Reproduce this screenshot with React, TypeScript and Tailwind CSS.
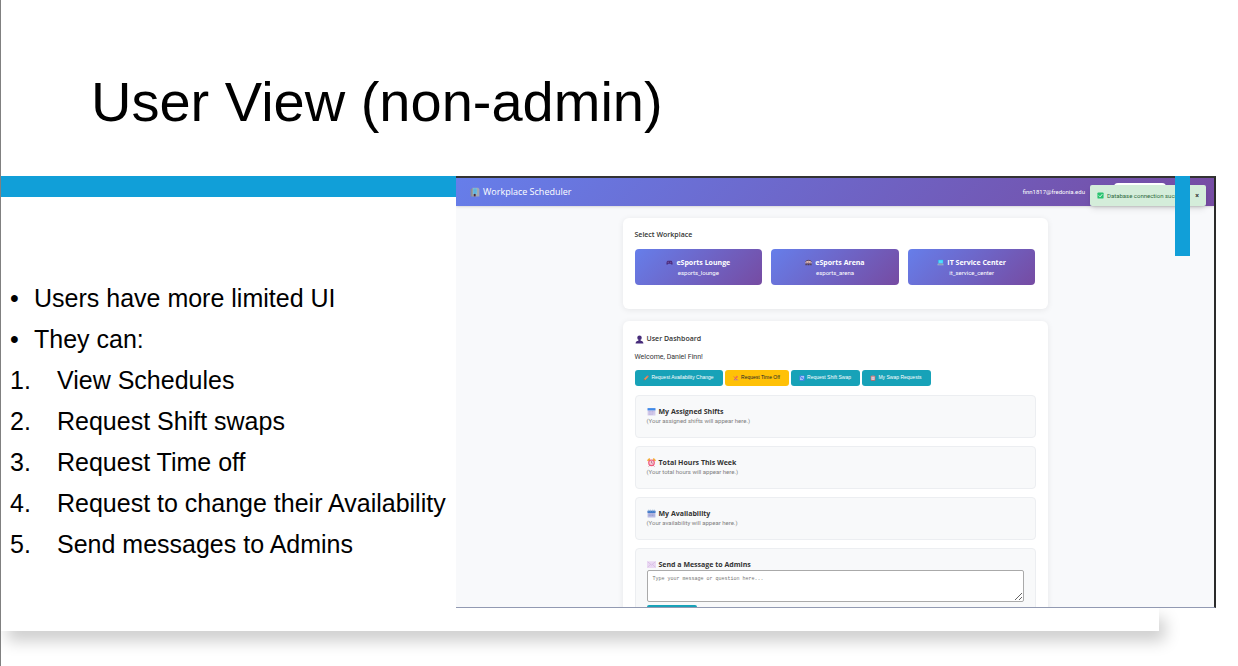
import type { ReactNode } from "react";

type IconName =
  | "building" | "gamepad" | "arena" | "laptop" | "user" | "pencil" | "timeoff"
  | "swap" | "clipboard" | "calendar" | "clock" | "spiral" | "envelope" | "check";

const drawings: Record<IconName, ReactNode> = {
  building: (
    <>
      <path d="M1 3l4-1v13H1z" fill="#8b8f96" />
      <path d="M4 1h9l2 2v12H4z" fill="#a3a9b2" />
      <path d="M5 2h6v10H5z" fill="#6cc3ea" />
      <path d="M8 2v10M5 5h6M5 8h6" stroke="#4a9ac8" strokeWidth=".6" />
      <path d="M6 11h3v4H6z" fill="#4b2834" />
    </>
  ),
  gamepad: (
    <>
      <path d="M4 4h8c2 0 3 4 3 7 0 3-2 3-4 0H5c-2 3-4 3-4 0 0-3 1-7 3-7z" fill="#4b2c7d" />
      <path d="M5 6v3M3.500 7.500h3" stroke="#8d6bbd" />
      <circle cx="11" cy="7.500" r="1.200" fill="#8d6bbd" />
    </>
  ),
  arena: (
    <>
      <path d="M1 7c2-4 12-4 14 0v3H1z" fill="#d9b7b5" />
      <path d="M1 6c2-4 12-4 14 0" stroke="#59424f" strokeWidth="2" fill="none" />
      <path d="M1 10h14v4h-3v-2h-2v2H6v-2H4v2H1z" fill="#533b48" />
      <path d="M4 7v3M8 6v4M12 7v3" stroke="#87525f" />
    </>
  ),
  laptop: (
    <>
      <path d="M3 2h11v8H3z" fill="#26c2ef" />
      <path d="M4 3h9v6H4z" fill="#52ddff" />
      <path d="M2 10h12l1 4H1z" fill="#a9bfd2" />
      <path d="M3 12h10" stroke="#50708c" />
    </>
  ),
  user: (
    <>
      <circle cx="8" cy="5" r="4" fill="#472c7a" />
      <path d="M6 8h4v2c3 0 5 2 5 5H1c0-3 2-5 5-5z" fill="#472c7a" />
    </>
  ),
  pencil: (
    <>
      <path d="M2 14l1-4 8-8 3 3-8 8z" fill="#f28a4c" />
      <path d="M11 2l3 3 1-1c1-1-2-4-3-3z" fill="#ef5876" />
      <path d="M2 14l1-3 2 2z" fill="#593d46" />
    </>
  ),
  timeoff: (
    <>
      <circle cx="10" cy="5" r="3" fill="#ff7c45" />
      <path d="M1 14c2-4 12-4 14 0z" fill="#b784b9" />
      <path d="M2 4l9 9M11 4l-8 9" stroke="#dc526d" strokeWidth="2" />
    </>
  ),
  swap: (
    <>
      <rect x="1" y="1" width="14" height="14" rx="2" fill="#4b82ed" />
      <path d="M4 7c1-4 6-4 8-1M12 3v3H9M12 9c-1 4-6 4-8 1M4 13v-3h3" stroke="#fff" strokeWidth="1.500" fill="none" />
    </>
  ),
  clipboard: (
    <>
      <rect x="2" y="2" width="12" height="13" rx="1" fill="#d86262" />
      <path d="M4 4h8v9H4z" fill="#f3eef5" />
      <path d="M5 1h6v3H5z" fill="#8d9199" />
      <path d="M5 7h6M5 9h6M5 11h6" stroke="#9d8aa8" />
    </>
  ),
  calendar: (
    <>
      <rect x="1" y="2" width="14" height="13" rx="1" fill="#d6cfed" />
      <path d="M1 2h14v4H1z" fill="#3f8ae8" />
      <path d="M3 8h10M3 10.500h10M3 13h7" stroke="#b9abd9" strokeWidth="1.400" strokeDasharray="2 1" />
    </>
  ),
  clock: (
    <>
      <path d="M1 5l4-4M15 5l-4-4" stroke="#f5ae35" strokeWidth="3" />
      <circle cx="8" cy="8.500" r="6" fill="#f0597c" />
      <circle cx="8" cy="8.500" r="4" fill="#f6cad5" />
      <path d="M8 5.500v3l2 1" stroke="#8e3e63" fill="none" />
      <path d="M3 15l2-2M13 15l-2-2" stroke="#cf4c6c" strokeWidth="1.500" />
    </>
  ),
  spiral: (
    <>
      <rect x="1" y="3" width="14" height="12" rx="1" fill="#b8bce4" />
      <path d="M1 3h14v4H1z" fill="#3c78c9" />
      <path d="M3 1v4M6 1v4M10 1v4M13 1v4" stroke="#85a9d4" />
      <path d="M3 9h10M3 11.500h10" stroke="#9b99cc" strokeWidth="1.400" strokeDasharray="2 1" />
    </>
  ),
  envelope: (
    <>
      <rect x="0" y="2" width="16" height="12" rx="1" fill="#ead9f3" />
      <path d="M1 3l7 6 7-6M1 13l5-5M15 13l-5-5" stroke="#cfaedd" fill="none" />
    </>
  ),
  check: (
    <>
      <rect x="1" y="1" width="14" height="14" rx="2" fill="#29c36f" />
      <path d="M4 8l3 3 5-6" stroke="#fff" strokeWidth="2" fill="none" />
    </>
  ),
};

function Icon({ name, className }: { name: IconName; className: string }) {
  return (
    <svg viewBox="0 0 16 16" aria-hidden="true" className={`shrink-0 ${className}`}>
      {drawings[name]}
    </svg>
  );
}

const bullets = ["Users have more limited UI", "They can:"];
const abilities = [
  "View Schedules",
  "Request Shift swaps",
  "Request Time off",
  "Request to change their Availability",
  "Send messages to Admins",
];

const workplaces: { icon: IconName; name: string; id: string }[] = [
  { icon: "gamepad", name: "eSports Lounge", id: "esports_lounge" },
  { icon: "arena", name: "eSports Arena", id: "esports_arena" },
  { icon: "laptop", name: "IT Service Center", id: "it_service_center" },
];

const actions: { icon: IconName; label: string; tone: string }[] = [
  { icon: "pencil", label: "Request Availability Change", tone: "w-[88px] bg-[#17a2b8] text-white" },
  { icon: "timeoff", label: "Request Time Off", tone: "w-[64px] bg-[#ffc107] text-[#212529]" },
  { icon: "swap", label: "Request Shift Swap", tone: "w-[69px] bg-[#17a2b8] text-white" },
  { icon: "clipboard", label: "My Swap Requests", tone: "w-[69px] bg-[#17a2b8] text-white" },
];

const panels: { icon: IconName; title: string; note: string }[] = [
  { icon: "calendar", title: "My Assigned Shifts", note: "(Your assigned shifts will appear here.)" },
  { icon: "clock", title: "Total Hours This Week", note: "(Your total hours will appear here.)" },
  { icon: "spiral", title: "My Availability", note: "(Your availability will appear here.)" },
];

const gradient = "bg-[linear-gradient(135deg,#667eea_0%,#764ba2_100%)]";
const card = "rounded-md bg-white px-3 shadow-[0_1px_6px_rgba(0,0,0,0.08)]";
const panel = "rounded border border-[#eceef1] bg-[#f8f9fa] px-[11px] pt-[11px]";
const small = "font-['Roboto','Open_Sans',sans-serif] text-[6px]";

function PanelTitle({ icon, children }: { icon: IconName; children: ReactNode }) {
  return (
    <h3 className="flex items-center gap-[3px] text-[7px] leading-[9px] font-bold text-[#333]">
      <Icon name={icon} className="size-[9px]" />
      {children}
    </h3>
  );
}

function SchedulerApp() {
  return (
    <div className="relative -mr-[57px] h-[432px] min-w-0 flex-1 overflow-hidden border-t-2 border-r-2 border-b border-t-[#333] border-r-[#2b2b2b] border-b-[#929ab2] bg-[#f8f9fb] font-['Open_Sans','Noto_Sans',sans-serif] text-[#333]">
      <header className={`flex h-7 items-center justify-between pr-[129px] pl-[14px] text-white shadow-sm ${gradient}`}>
        <h2 className="flex items-center gap-[3px] text-[9px] leading-3 font-medium">
          <Icon name="building" className="size-[10px]" />
          Workplace Scheduler
        </h2>
        <span className={`leading-2 ${small}`}>finn1817@fredonia.edu</span>
      </header>

      <div className="absolute top-[5px] right-[48px] h-4 w-[52px] rounded bg-white" />
      <div role="status" className={`absolute top-[7px] right-2 flex h-[21px] w-[116px] items-center gap-[3px] rounded-xs bg-[#d4edda] px-[7px] text-[#2f6b40] shadow-md ${small}`}>
        <Icon name="check" className="size-[7px]" />
        <span className="leading-2 whitespace-nowrap">Database connection succ</span>
        <button type="button" aria-label="Close" className="ml-auto text-[7px] leading-2 font-bold text-[#333]">×</button>
      </div>

      <main className="mx-auto flex max-w-[425px] flex-col gap-3 pt-3">
        <section className={`${card} pt-3 pb-6`}>
          <h2 className="text-[7px] leading-[10px] font-semibold">Select Workplace</h2>
          <div className="mt-[9px] grid grid-cols-3 gap-[9px]">
            {workplaces.map((w) => (
              <button key={w.id} type="button" className={`flex h-9 flex-col items-center justify-center gap-[2px] rounded text-white ${gradient}`}>
                <span className="flex items-center gap-[3px] text-[7px] leading-[9px] font-bold">
                  <Icon name={w.icon} className="size-[7px]" />
                  {w.name}
                </span>
                <span className={`leading-2 ${small}`}>{w.id}</span>
              </button>
            ))}
          </div>
        </section>

        <section className={`${card} pt-[13px]`}>
          <h2 className="flex items-center gap-[3px] text-[7px] leading-[10px] font-semibold">
            <Icon name="user" className="size-[9px]" />
            User Dashboard
          </h2>
          <p className="mt-2 font-['Roboto','Open_Sans',sans-serif] text-[7px] leading-[10px]">Welcome, Daniel Finn!</p>
          <div className="mt-2 flex gap-[2px]">
            {actions.map((a) => (
              <button key={a.label} type="button" className={`flex h-4 items-center justify-center gap-[2px] rounded-[3px] font-['Liberation_Sans',sans-serif] text-[5px] whitespace-nowrap ${a.tone}`}>
                <Icon name={a.icon} className="size-[6px]" />
                {a.label}
              </button>
            ))}
          </div>
          <div className="mt-[9px] flex flex-col gap-2">
            {panels.map((p) => (
              <div key={p.title} className={`${panel} h-[43px]`}>
                <PanelTitle icon={p.icon}>{p.title}</PanelTitle>
                <p className={`leading-[9px] text-[#808080] ${small}`}>{p.note}</p>
              </div>
            ))}
            <div className={`${panel} pb-3`}>
              <PanelTitle icon="envelope">Send a Message to Admins</PanelTitle>
              <textarea
                aria-label="Send a Message to Admins"
                placeholder="Type your message or question here..."
                className="mt-px block h-8 w-full rounded-xs border border-[#aaa] bg-white px-[5px] py-1 font-['Liberation_Mono',monospace] text-[5px] leading-2 placeholder:text-[#757575]"
              />
              <button type="button" className="mt-[3px] h-4 w-[50px] rounded-xs bg-[#17a2b8]" aria-label="Send message" />
            </div>
          </div>
        </section>
      </main>
    </div>
  );
}

export default function App() {
  return (
    <div className="min-h-screen overflow-hidden border-l border-[#808080] bg-white pb-9 font-['Liberation_Sans',sans-serif] text-black">
      <article className="relative mr-[79px]">
        <header className="flex h-44 items-center pt-7 pl-[90px]">
          <h1 className="text-[56px] leading-[64px]">User View (non-admin)</h1>
        </header>
        <div className="relative z-10 flex bg-white">
          <div className="w-[455px] shrink-0">
            <div className="h-[21px] bg-[#119fd8]" />
            <div className="pt-[81px] pl-[9px] text-[25px] leading-[41px]">
              <ul>
                {bullets.map((b) => (
                  <li key={b} className="flex">
                    <span className="w-6">•</span>
                    {b}
                  </li>
                ))}
              </ul>
              <ol>
                {abilities.map((a, i) => (
                  <li key={a} className="flex whitespace-nowrap">
                    <span className="w-[47px]">{i + 1}.</span>
                    {a}
                  </li>
                ))}
              </ol>
            </div>
          </div>
          <SchedulerApp />
        </div>
        <div className="h-[23px] bg-white shadow-[6px_10px_16px_rgba(0,0,0,0.2)]" />
        <div className="absolute top-44 -right-[31px] z-20 h-20 w-[15px] bg-[#119fd8]" />
      </article>
    </div>
  );
}
